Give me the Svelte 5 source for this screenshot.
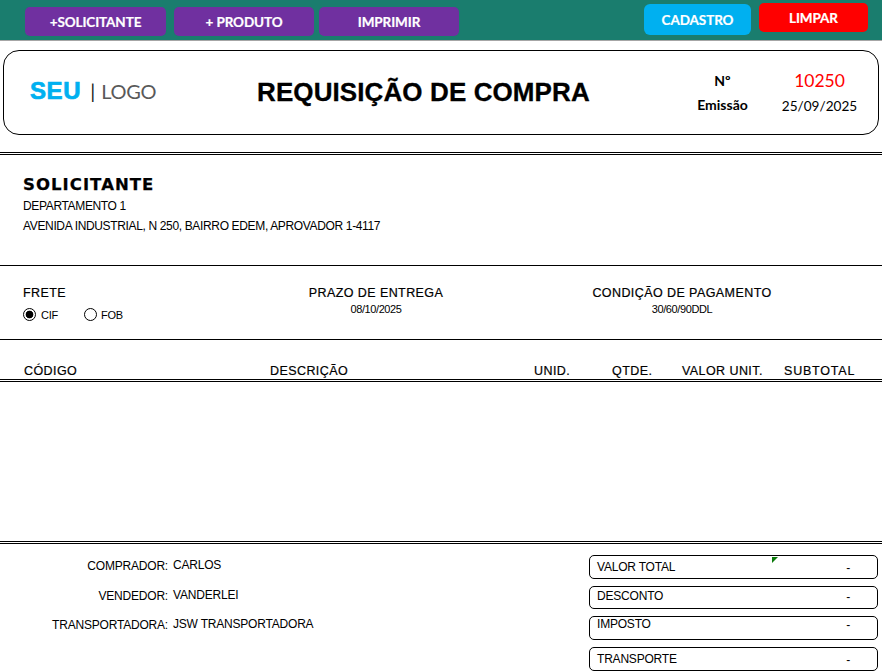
<script>
    const columns = [
        { label: "CÓDIGO", cls: "c-cod" },
        { label: "DESCRIÇÃO", cls: "c-desc" },
        { label: "UNID.", cls: "c-unid" },
        { label: "QTDE.", cls: "c-qtde" },
        { label: "VALOR UNIT.", cls: "c-valor" },
        { label: "SUBTOTAL", cls: "c-sub" }
    ];
    const people = [
        ["COMPRADOR:", "CARLOS"],
        ["VENDEDOR:", "VANDERLEI"],
        ["TRANSPORTADORA:", "JSW TRANSPORTADORA"]
    ];
    const totals = ["VALOR TOTAL", "DESCONTO", "IMPOSTO", "TRANSPORTE"];
</script>

<div class="page">
    <div class="toolbar">
        <div class="left-btns">
            <button class="btn purple first">+SOLICITANTE</button>
            <button class="btn purple second">+ PRODUTO</button>
            <button class="btn purple third">IMPRIMIR</button>
        </div>
        <button class="btn cadastro">CADASTRO</button>
        <button class="btn limpar">LIMPAR</button>
    </div>

    <header class="head">
        <div class="logo"><b>SEU</b><span class="bar">|</span><span class="logo-txt">LOGO</span></div>
        <h1>REQUISIÇÃO DE COMPRA</h1>
        <div class="meta">
            <span class="meta-label">Nº</span>
            <span class="num">10250</span>
            <span class="meta-label emissao">Emissão</span>
            <span class="date">25/09/2025</span>
        </div>
    </header>

    <section class="solicitante">
        <h2>SOLICITANTE</h2>
        <p>DEPARTAMENTO 1</p>
        <p>AVENIDA INDUSTRIAL, N 250, BAIRRO EDEM, APROVADOR 1-4117</p>
    </section>

    <section class="info">
        <div class="frete">
            <div class="info-title">FRETE</div>
            <div class="radios">
                <span class="radio on"></span><span class="r-label">CIF</span>
                <span class="radio fob"></span><span class="r-label">FOB</span>
            </div>
        </div>
        <div class="prazo">
            <div class="info-title">PRAZO DE ENTREGA</div>
            <div class="info-val">08/10/2025</div>
        </div>
        <div class="cond">
            <div class="info-title">CONDIÇÃO DE PAGAMENTO</div>
            <div class="info-val">30/60/90DDL</div>
        </div>
    </section>

    <div class="thead">
        {#each columns as col}
            <span class={col.cls}>{col.label}</span>
        {/each}
    </div>

    <div class="tbody"></div>

    <footer class="foot">
        <div class="people">
            {#each people as [label, value]}
                <div class="person"><span class="p-label">{label}</span><span class="p-val">{value}</span></div>
            {/each}
        </div>
        <div class="totals">
            {#each totals as name, i}
                <div class="total t{i}">
                    <span>{name}</span><span class="dash">-</span>
                    {#if i === 0}<span class="flag"></span>{/if}
                </div>
            {/each}
        </div>
    </footer>
</div>

<style>
    :global(body) {
        margin: 0;
        background: #fff;
    }

    .page {
        width: 882px;
        height: 671px;
        overflow: hidden;
        color: #000;
        font-family: "Liberation Sans", Arial, sans-serif;
    }

    .toolbar {
        display: flex;
        align-items: flex-start;
        height: 40px;
        background: #1a7d6e;
        border-bottom: 1px solid #a6a6a6;
    }

    .left-btns {
        display: flex;
        margin: 7px 0 0 25px;
        width: 619px;
    }

    .btn {
        border: 0;
        padding: 0;
        color: #fff;
        font-family: Lato, sans-serif;
        font-weight: 700;
        font-size: 13.5px;
        letter-spacing: -0.1px;
        border-radius: 5px;
        -webkit-text-stroke: 0.2px #fff;
    }

    .purple {
        width: 140px;
        height: 29px;
        background: #7030a0;
    }

    .first {
        width: 141px;
    }

    .second {
        margin-left: 8px;
    }

    .third {
        margin-left: 5px;
    }

    .cadastro {
        width: 107px;
        height: 31px;
        margin-top: 4px;
        background: #00b0f0;
        border-radius: 6px;
    }

    .limpar {
        width: 109px;
        height: 29px;
        margin: 3px 0 0 8px;
        background: #ff0000;
    }

    .head {
        box-sizing: border-box;
        display: flex;
        align-items: center;
        height: 85px;
        margin: 9px 3px 0;
        border: 1px solid #000;
        border-radius: 16px;
    }

    .logo {
        display: flex;
        align-items: baseline;
        width: 253px;
        padding-left: 26px;
        box-sizing: border-box;
        margin-top: -4px;
        font-size: 20px;
    }

    .logo b {
        color: #00b0f0;
        font-family: "Liberation Sans", sans-serif;
        font-size: 24px;
        font-weight: 700;
        letter-spacing: 0.6px;
        -webkit-text-stroke: 0.7px #00b0f0;
    }

    .bar {
        margin: 0 6px 0 9px;
        color: #222;
        font-family: Lato, sans-serif;
    }

    .logo-txt {
        color: #595959;
        font-family: Lato, sans-serif;
        letter-spacing: -0.3px;
    }

    h1 {
        width: 420px;
        margin: -1px 0 0;
        font-size: 26px;
        font-weight: 700;
        letter-spacing: 0.1px;
        white-space: nowrap;
        -webkit-text-stroke: 0.3px #000;
    }

    .meta {
        display: grid;
        grid-template-columns: 85px 1fr;
        grid-template-rows: 27px 25px;
        align-items: center;
        justify-items: center;
        margin-left: 3px;
        width: 194px;
        font-family: Lato, sans-serif;
    }

    .meta-label {
        font-size: 14px;
        font-weight: 700;
    }

    .emissao {
        margin-bottom: 3px;
    }

    .num {
        color: #ff0000;
        font-size: 17.5px;
    }

    .date {
        font-size: 13.6px;
    }

    .solicitante {
        box-sizing: border-box;
        height: 114px;
        margin-top: 17px;
        padding: 20px 23px 0;
        border-top: 3px double #000;
        border-bottom: 1px solid #000;
    }

    h2 {
        margin: 0 0 1px;
        font-family: "DejaVu Sans", sans-serif;
        font-size: 16.5px;
        line-height: 20px;
        font-weight: 700;
        letter-spacing: 1.05px;
        -webkit-text-stroke: 0.25px #000;
    }

    .solicitante p {
        margin: 0;
        font-size: 12px;
        line-height: 20px;
        letter-spacing: -0.35px;
    }

    .info {
        box-sizing: border-box;
        display: flex;
        height: 74px;
        padding: 20px 0 0 23px;
        border-bottom: 1px solid #000;
    }

    .info-title {
        font-size: 12.5px;
        line-height: 14px;
        letter-spacing: 0.42px;
        -webkit-text-stroke: 0.2px #000;
        white-space: nowrap;
    }

    .info-val {
        margin-top: 3px;
        font-size: 11px;
        line-height: 13px;
        letter-spacing: -0.4px;
    }

    .frete {
        width: 285px;
    }

    .radios {
        display: flex;
        align-items: center;
        margin-top: 8px;
        font-size: 11px;
    }

    .radio {
        box-sizing: border-box;
        width: 13px;
        height: 13px;
        border: 1px solid #000;
        border-radius: 50%;
    }

    .radio.on {
        background: radial-gradient(circle, #000 0 3.5px, #fff 4.2px);
    }

    .radio.fob {
        margin-left: 23px;
    }

    .r-label {
        margin-left: 5px;
        width: 20px;
        letter-spacing: -0.3px;
    }

    .radio.fob + .r-label {
        margin-left: 4px;
    }

    .prazo {
        width: 136px;
        text-align: center;
    }

    .cond {
        width: 180px;
        margin-left: 148px;
        text-align: center;
    }

    .thead {
        box-sizing: border-box;
        display: flex;
        align-items: flex-end;
        height: 42px;
        padding-bottom: 1px;
        border-bottom: 3px double #000;
        font-size: 12.5px;
        letter-spacing: 0.42px;
        -webkit-text-stroke: 0.2px #000;
        line-height: 14px;
    }

    .thead span {
        white-space: nowrap;
    }

    .c-cod {
        width: 246px;
        margin-left: 24px;
    }

    .c-desc {
        width: 264px;
    }

    .c-unid {
        width: 78px;
    }

    .c-qtde {
        width: 70px;
    }

    .c-valor {
        width: 102px;
    }

    .c-sub {
        letter-spacing: 0.8px;
    }

    .tbody {
        height: 159px;
    }

    .foot {
        box-sizing: border-box;
        display: flex;
        height: 131px;
        border-top: 3px double #000;
    }

    .people {
        width: 589px;
        padding-top: 14px;
    }

    .person {
        display: flex;
        height: 29.5px;
        font-size: 12px;
        line-height: 14px;
        letter-spacing: -0.2px;
    }

    .p-label {
        width: 168px;
        text-align: right;
        padding-top: 1px;
    }

    .p-val {
        margin-left: 5px;
    }

    .totals {
        width: 289px;
        padding-top: 11px;
    }

    .total {
        position: relative;
        box-sizing: border-box;
        display: flex;
        justify-content: space-between;
        align-items: center;
        height: 24px;
        margin-bottom: 7px;
        padding: 0 27px 0 7px;
        border: 1px solid #000;
        border-radius: 5px;
        font-size: 12px;
        letter-spacing: -0.2px;
    }

    .t1 {
        height: 23px;
        margin-bottom: 7px;
        align-items: flex-start;
        padding-top: 2px;
    }

    .t2 {
        align-items: flex-start;
        height: 24px;
    }

    .dash {
        margin-top: 1px;
    }

    .flag {
        position: absolute;
        top: 1px;
        left: 182px;
        width: 0;
        height: 0;
        border-top: 6px solid #0a7a0a;
        border-right: 6px solid transparent;
    }
</style>
